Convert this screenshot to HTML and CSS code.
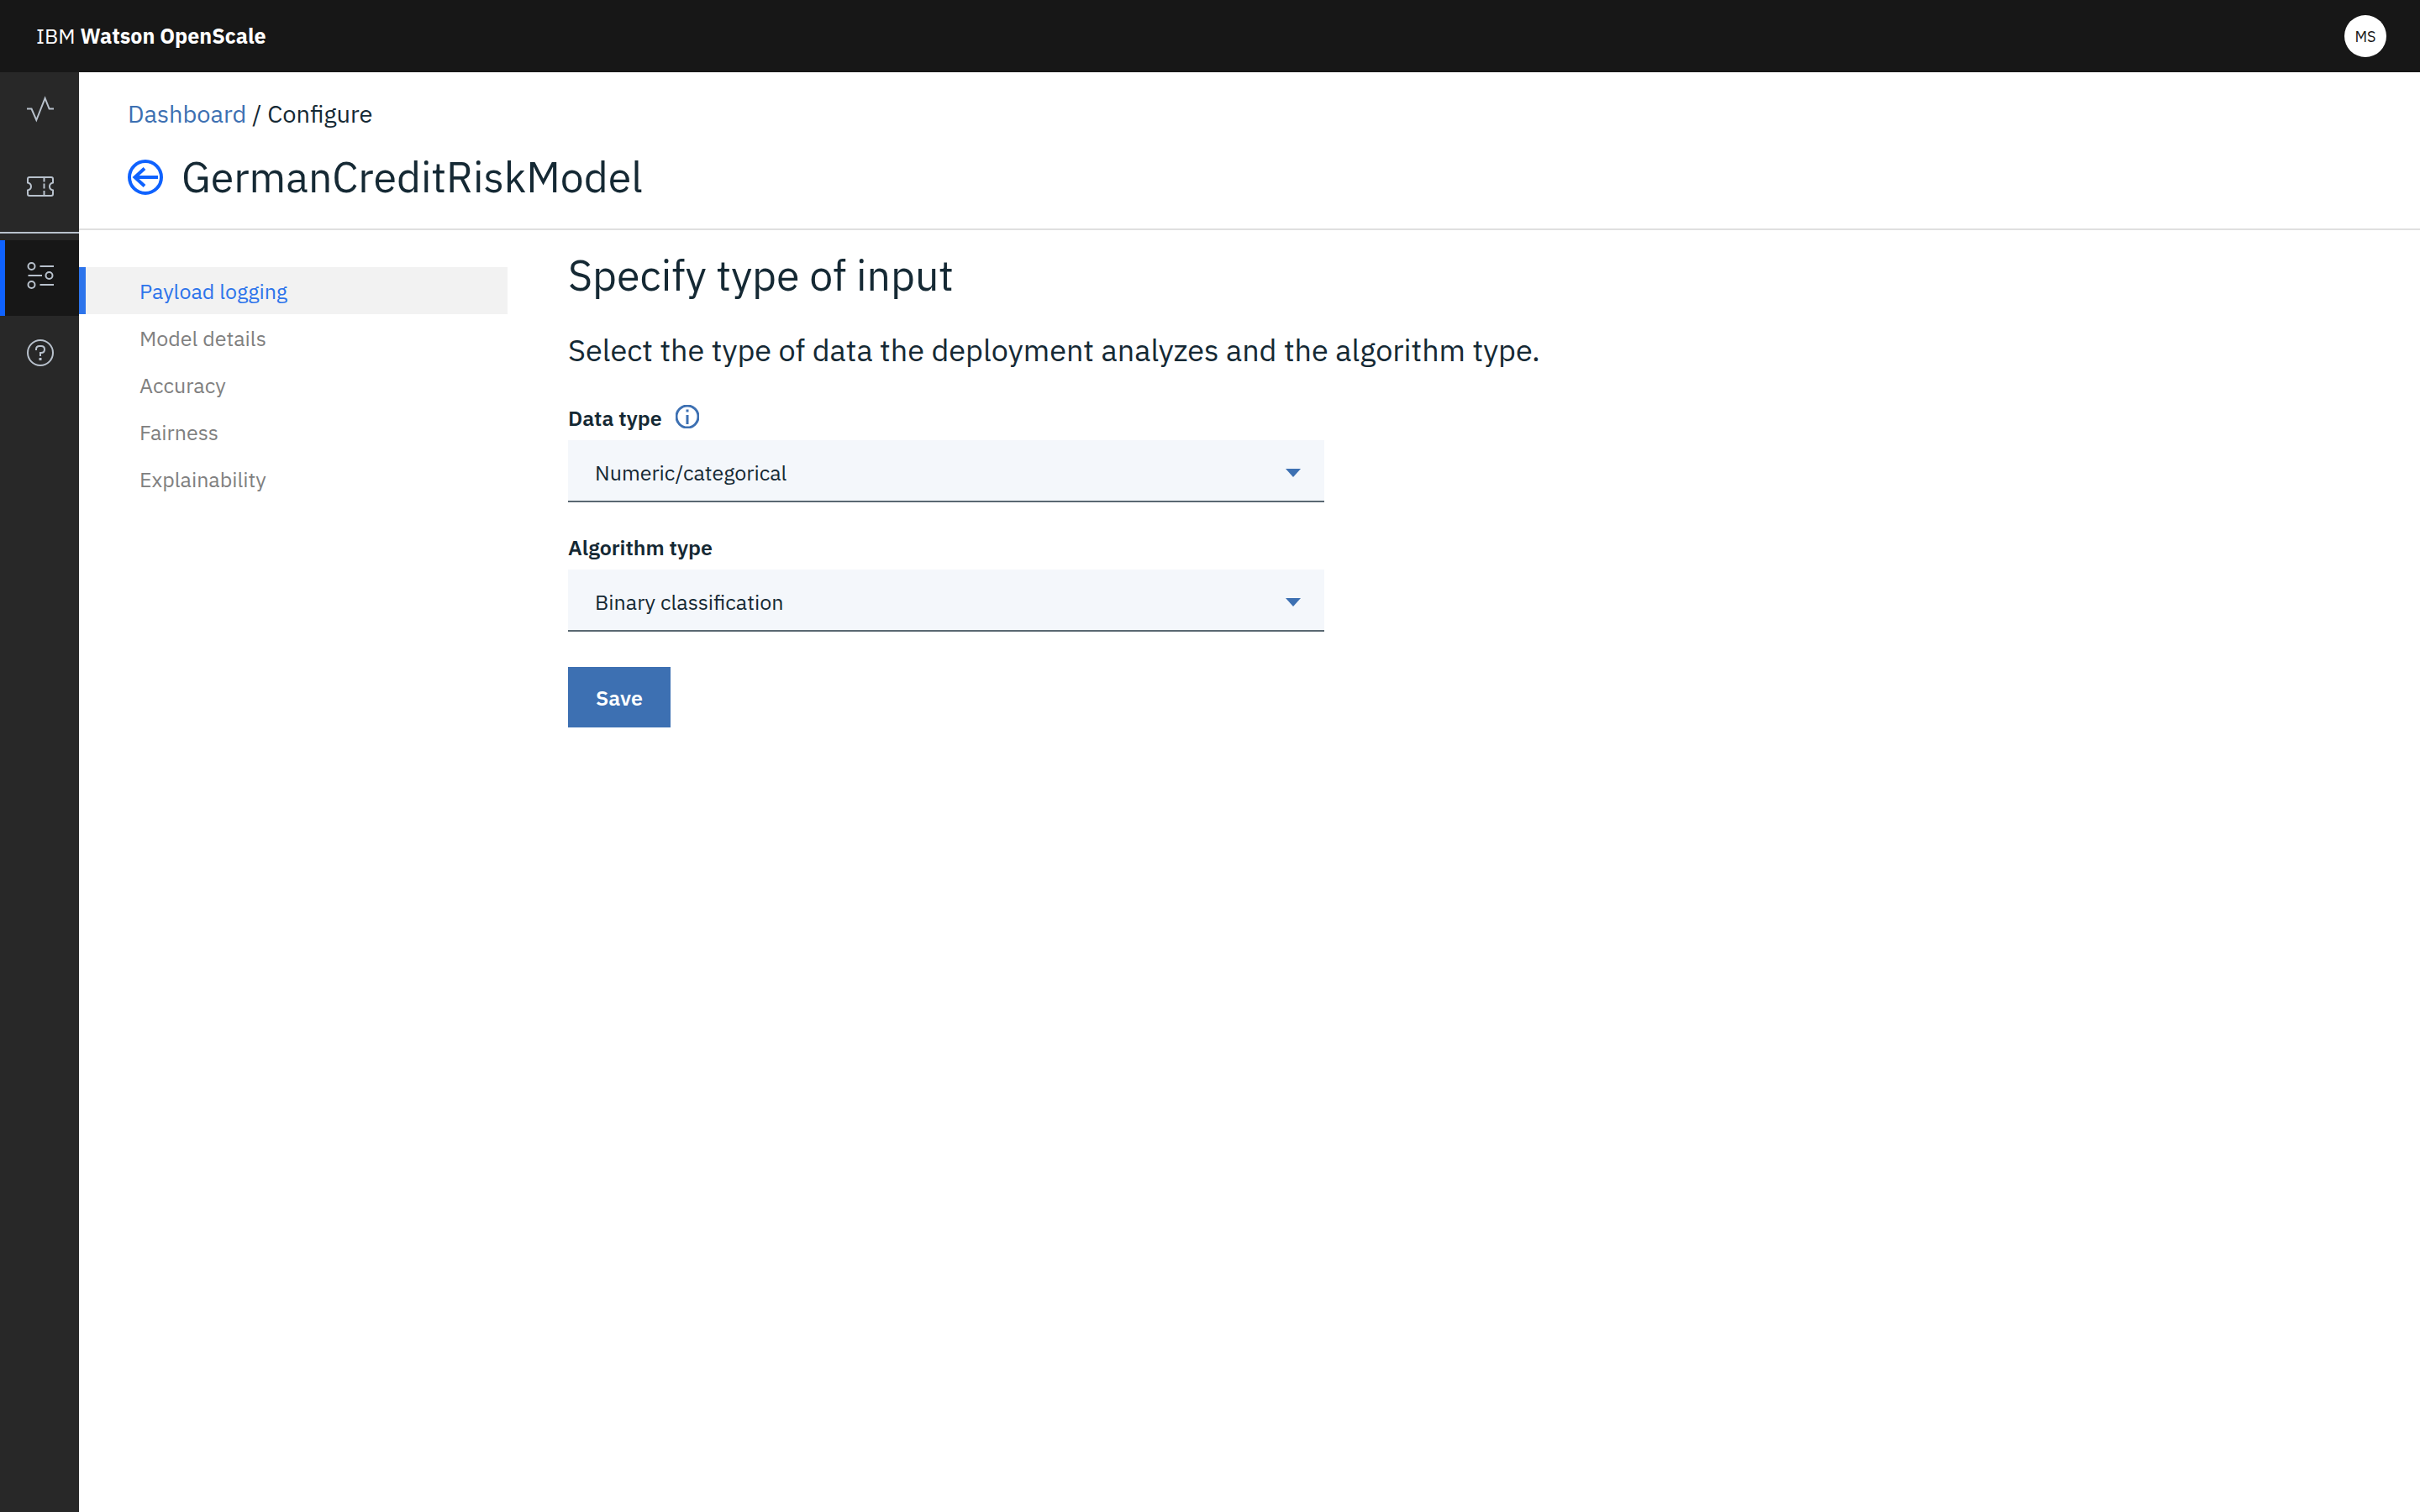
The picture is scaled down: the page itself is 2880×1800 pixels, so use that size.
FILE: index.html
```html
<!DOCTYPE html>
<html lang="en">
<head>
<meta charset="utf-8">
<meta name="viewport" content="width=device-width, initial-scale=1">
<title>GermanCreditRiskModel - IBM Watson OpenScale</title>
<link rel="stylesheet" href="styles.css">
</head>
<body>
<header class="topbar">
  <a class="brand" href="#">IBM <strong>Watson OpenScale</strong></a>
  <button class="avatar" type="button">MS</button>
</header>
<div class="shell">
  <nav class="rail" aria-label="Main">
    <a class="rail-item" href="#" aria-label="Insights">
      <svg class="rail-icon" viewBox="0 0 32 32"><path d="M0 14.5h5.5l5.8 13.5L21.6 2l5 12.5H32"/></svg>
    </a>
    <a class="rail-item" href="#" aria-label="Transactions">
      <svg class="rail-icon" viewBox="0 0 32 32"><path d="M3 6h26q2 0 2 2v4.5q-4 1-4 4.500t4 4.500V26q0 2-2 2H3q-2 0-2-2v-4.500q4-1 4-4.500t-4-4.500V8q0-2 2-2z"/><path d="M20.500 7v4.500M20.500 13.500v6M20.500 22v5"/></svg>
    </a>
    <hr class="rail-divider">
    <a class="rail-item rail-item-active" href="#" aria-label="Configure" aria-current="page">
      <svg class="rail-icon" viewBox="0 0 32 32"><circle cx="5.500" cy="2" r="4"/><path d="M15.500 2H32M1.500 13H18M15.500 24H32"/><circle cx="26.500" cy="13" r="4"/><circle cx="5.500" cy="24" r="4"/></svg>
    </a>
    <a class="rail-item" href="#" aria-label="Help">
      <svg class="rail-icon" viewBox="0 0 32 32"><circle cx="16" cy="15" r="15"/><path d="M11 12v-1q0-4 4-4h2q4 0 4 4t-4 4h-1v4"/><path d="M16 21v3" stroke-width="3"/></svg>
    </a>
  </nav>
  <div class="page">
    <div class="page-head">
      <nav class="breadcrumb" aria-label="Breadcrumb"><a href="#">Dashboard</a> / Configure</nav>
      <div class="title-row">
        <a class="back" href="#" aria-label="Back">
          <svg viewBox="0 0 42 42"><circle cx="21" cy="21" r="19"/><path d="M36 21H8.500M20 10.500L8.500 21L20 31.500"/></svg>
        </a>
        <h1>GermanCreditRiskModel</h1>
      </div>
    </div>
    <div class="columns">
      <nav class="steps" aria-label="Configuration steps">
        <a class="step step-active" href="#" aria-current="step">Payload logging</a>
        <a class="step" href="#">Model details</a>
        <a class="step" href="#">Accuracy</a>
        <a class="step" href="#">Fairness</a>
        <a class="step" href="#">Explainability</a>
      </nav>
      <main class="content">
        <h2>Specify type of input</h2>
        <p class="lead">Select the type of data the deployment analyzes and the algorithm type.</p>
        <form>
          <div class="field">
            <div class="label-row">
              <label for="data-type">Data type</label>
              <button class="info" type="button" aria-label="About data types">
                <svg viewBox="0 0 28 28"><circle cx="14" cy="14" r="13"/><path d="M14 12v11"/><path d="M14 5.500v3"/></svg>
              </button>
            </div>
            <div class="select">
              <select id="data-type"><option>Numeric/categorical</option></select>
              <svg class="caret" viewBox="0 0 18 10"><path d="M0 0h18l-9 10z"/></svg>
            </div>
          </div>
          <div class="field">
            <div class="label-row"><label for="algorithm-type">Algorithm type</label></div>
            <div class="select">
              <select id="algorithm-type"><option>Binary classification</option></select>
              <svg class="caret" viewBox="0 0 18 10"><path d="M0 0h18l-9 10z"/></svg>
            </div>
          </div>
          <button class="save" type="submit">Save</button>
        </form>
      </main>
    </div>
  </div>
</div>
</body>
</html>
```
FILE: styles.css
```css
* {
  box-sizing: border-box;
}

body {
  margin: 0;
  min-height: 100vh;
  display: flex;
  flex-direction: column;
  background: #fff;
  color: #152934;
  font: 400 25px/32px "IBM Plex Sans", Roboto, sans-serif;
}

a {
  color: inherit;
  text-decoration: none;
}

button,
select {
  margin: 0;
  border: 0;
  border-radius: 0;
  font: inherit;
  color: inherit;
  cursor: pointer;
}

svg {
  display: block;
  fill: none;
}

/* Top bar */
.topbar {
  display: flex;
  align-items: center;
  justify-content: space-between;
  height: 86px;
  padding: 0 40px 0 43px;
  background: #171717;
  color: #fff;
}

.brand strong {
  font-weight: 700;
}

.avatar {
  width: 50px;
  height: 50px;
  padding: 2px 0 0;
  border-radius: 50%;
  background: #fff;
  color: #171717;
  font-size: 18px;
}

/* Icon rail */
.shell {
  flex: 1;
  display: flex;
}

.rail {
  flex: none;
  width: 94px;
  background: #282828;
}

.rail-item {
  display: flex;
  align-items: center;
  justify-content: center;
  height: 90px;
  border-left: 6px solid transparent;
  padding-right: 4px;
}

.rail-item-active {
  border-left-color: #0f62fe;
  background: #171717;
}

.rail-icon {
  width: 32px;
  height: 32px;
  overflow: visible;
  stroke: #b8c1cc;
  stroke-width: 2;
}

.rail-divider {
  height: 2px;
  margin: 10px 0 8px;
  border: 0;
  background: #b8c1cc;
}

/* Page heading */
.page {
  flex: 1;
  min-width: 0;
}

.page-head {
  padding: 30px 58px 28px;
  border-bottom: 2px solid #dfdfdf;
}

.breadcrumb {
  font-size: 29px;
  line-height: 38px;
}

.breadcrumb a {
  color: #3d70b2;
}

.title-row {
  display: flex;
  align-items: center;
  gap: 22px;
  margin-top: 24px;
}

.back svg {
  width: 42px;
  height: 42px;
  stroke: #0f62fe;
  stroke-width: 4;
}

h1,
h2 {
  margin: 0;
  font-size: 50px;
  font-weight: 400;
  line-height: 66px;
}

/* Step list and form */
.columns {
  display: flex;
  gap: 72px;
}

.steps {
  flex: none;
  width: 510px;
  padding-top: 44px;
}

.step {
  display: block;
  padding: 2px 0 0 64px;
  border-left: 8px solid transparent;
  line-height: 54px;
  color: #808080;
}

.step-active {
  border-left-color: #2d74eb;
  background: #f2f2f2;
  color: #2d74eb;
}

.content {
  flex: 1;
  min-width: 0;
  padding-top: 21px;
}

.lead {
  margin: 32px 0 41px;
  font-size: 36px;
  line-height: 48px;
}

.field {
  max-width: 900px;
  margin-bottom: 38px;
}

.label-row {
  display: flex;
  align-items: flex-start;
  gap: 16px;
  margin-bottom: 10px;
  font-weight: 600;
}

.info {
  padding: 0;
  background: none;
}

.info svg {
  width: 28px;
  height: 28px;
  stroke: #3d70b2;
  stroke-width: 3;
}

.select {
  position: relative;
}

.select select {
  display: block;
  width: 100%;
  height: 74px;
  padding: 6px 64px 0 32px;
  border-bottom: 2px solid #5a6872;
  background: #f4f7fb;
  appearance: none;
}

.caret {
  position: absolute;
  top: 34px;
  right: 28px;
  width: 18px;
  height: 10px;
  fill: #3d70b2;
  pointer-events: none;
}

.save {
  height: 72px;
  margin-top: 4px;
  padding: 2px 33px 0;
  background: #3d70b2;
  color: #fff;
  font-weight: 600;
}
```
